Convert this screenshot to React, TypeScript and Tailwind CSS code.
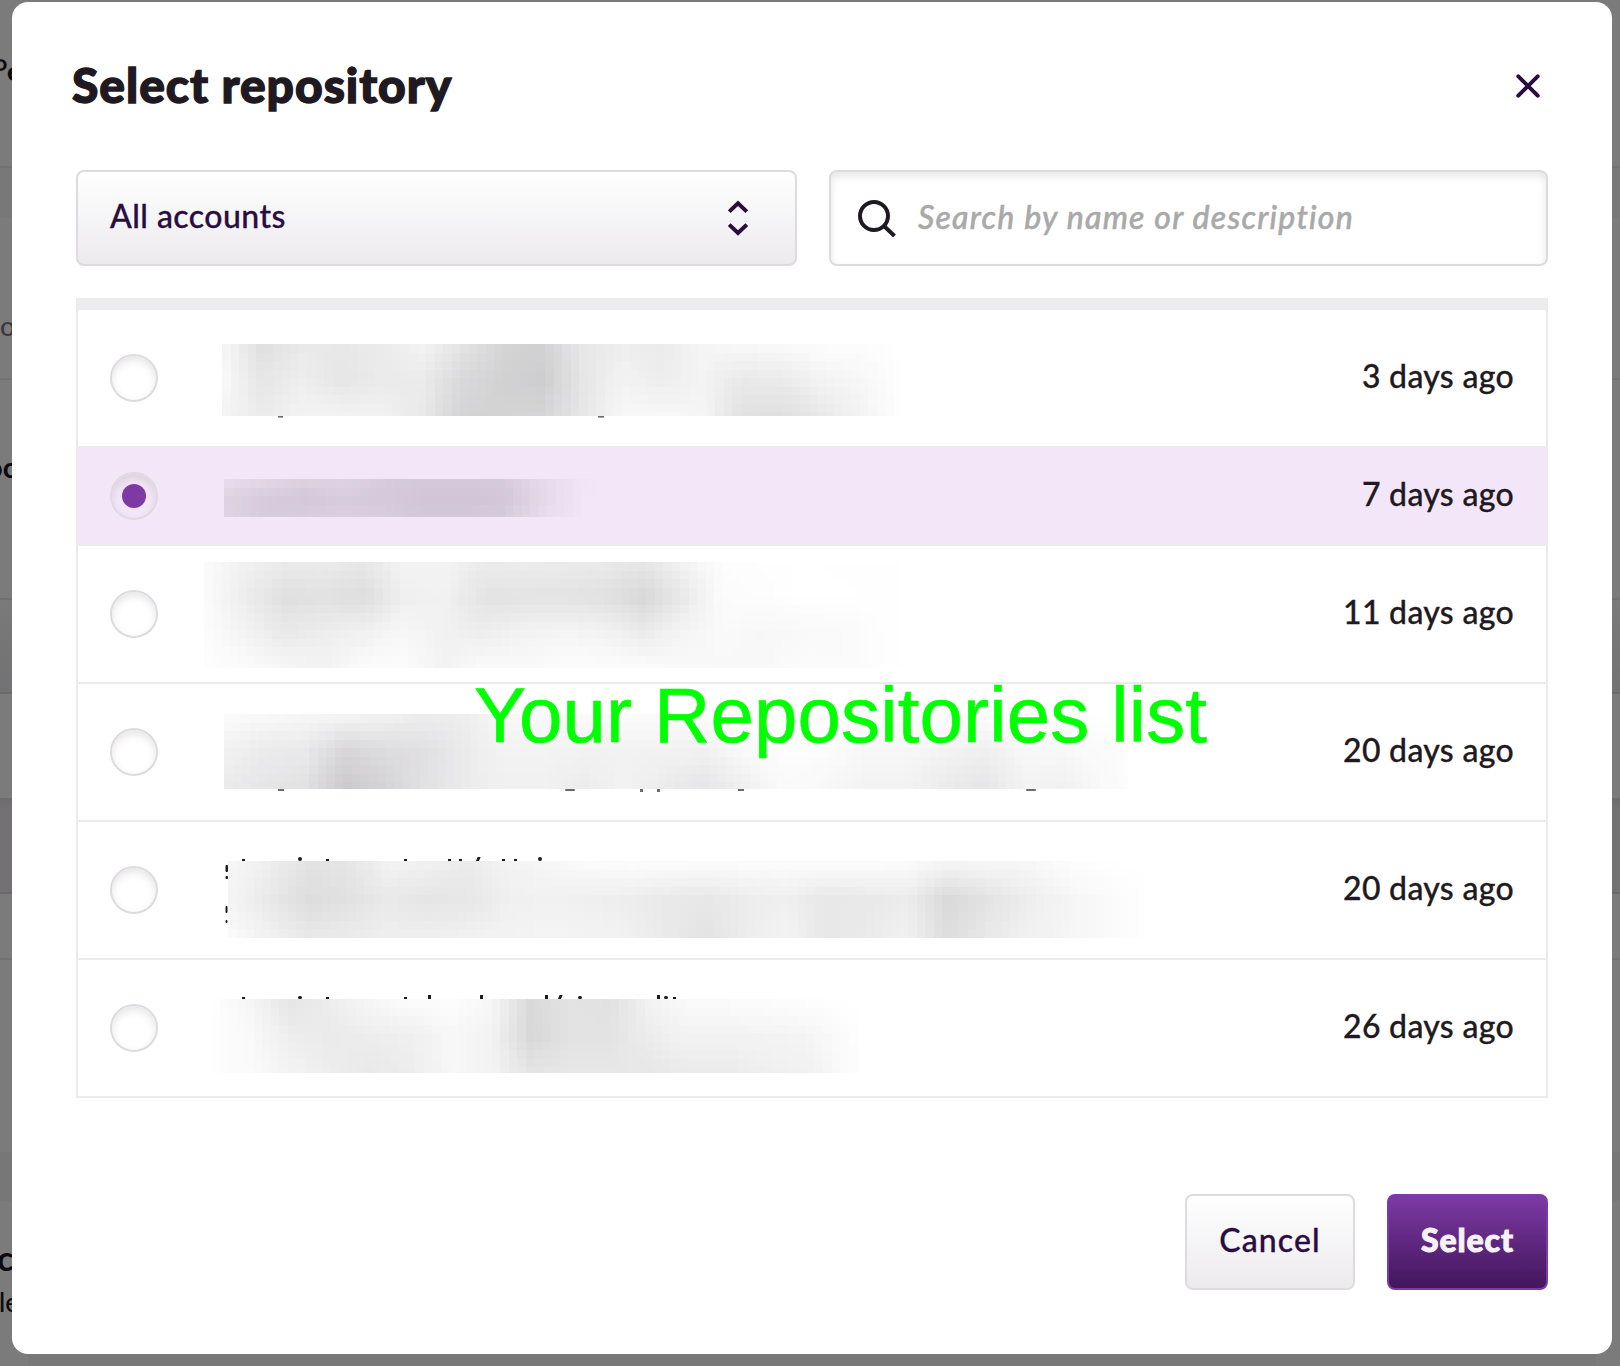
import React from 'react';

type Mark = { x: number; y: number; w: number; h: number; r?: number; slant?: boolean };

type Smudge = {
  box: string;
  width: number;
  height: number;
  tint: string;
  tones: number[][];
  marks?: Mark[];
  markColor?: string;
};

type Repo = { age: string; selected?: boolean; rowClass: string; smudge: Smudge };

const STEP = 40;
const CELL = 8.5;

function toneAt(tones: number[][], u: number, v: number) {
  const fy = Math.max(0, Math.min(1, v)) * (tones.length - 1);
  const r0 = Math.floor(fy);
  const r1 = Math.min(r0 + 1, tones.length - 1);
  const pick = (row: number[]) => {
    const c0 = Math.min(Math.floor(u), row.length - 1);
    const c1 = Math.min(c0 + 1, row.length - 1);
    return row[c0] + (row[c1] - row[c0]) * Math.min(1, u - c0);
  };
  const a = pick(tones[r0]);
  const b = pick(tones[r1]);
  return a + (b - a) * (fy - r0);
}

/* Pixelated privacy patch that hides a repository's name. */
function Redaction({ smudge }: { smudge: Smudge }) {
  const cols = Math.ceil(smudge.width / CELL);
  const rows = Math.ceil(smudge.height / CELL);
  const cells: React.ReactNode[] = [];
  for (let r = 0; r < rows; r++) {
    for (let c = 0; c < cols; c++) {
      const x = Math.round(c * CELL);
      const y = Math.round(r * CELL);
      const w = Math.min(Math.round((c + 1) * CELL), smudge.width) - x;
      const h = Math.min(Math.round((r + 1) * CELL), smudge.height) - y;
      const tone = toneAt(smudge.tones, (x + w / 2) / STEP, (y + h / 2) / smudge.height);
      cells.push(
        <rect key={`${r}-${c}`} x={x} y={y} width={w} height={h} fill={smudge.tint} fillOpacity={tone / 230} />,
      );
    }
  }
  return (
    <svg
      className={`block shrink-0 overflow-visible ${smudge.box}`}
      width={smudge.width}
      height={smudge.height}
      aria-hidden="true"
    >
      <g shapeRendering="crispEdges">{cells}</g>
      {(smudge.marks ?? []).map((m, i) => (
        <rect
          key={i}
          x={m.x}
          y={m.y}
          width={m.w}
          height={m.h}
          rx={m.r ?? 0}
          fill={smudge.markColor ?? '#1f1a22'}
          transform={m.slant ? 'skewX(-22)' : undefined}
        />
      ))}
    </svg>
  );
}

const repos: Repo[] = [
  {
    age: '3 days ago',
    rowClass: 'h-[138px]',
    smudge: {
      box: 'ml-[64px] mt-[34px]',
      width: 680,
      height: 72,
      tint: '#1c1820',
      tones: [
        [8, 32, 22, 22, 20, 12, 26, 42, 46, 24, 18, 20, 10, 6, 5, 2, 2, 0],
        [6, 25, 17, 25, 20, 20, 38, 46, 50, 26, 12, 18, 12, 22, 20, 12, 8, 0],
        [10, 20, 12, 12, 14, 22, 44, 44, 42, 24, 8, 7, 10, 30, 32, 22, 12, 0],
      ],
      marks: [
        { x: 56, y: 72, w: 5, h: 1.6 },
        { x: 376, y: 72, w: 6, h: 1.6 },
      ],
      markColor: '#6f6678',
    },
  },
  {
    age: '7 days ago',
    selected: true,
    rowClass: 'h-[98px] bg-[#f3e6f8]',
    smudge: {
      box: 'ml-[66px] mt-[31px]',
      width: 373,
      height: 38,
      tint: '#2c2838',
      tones: [
        [10, 18, 24, 22, 32, 34, 34, 32, 14, 2, 0],
        [24, 32, 36, 32, 34, 40, 40, 38, 16, 0, 0],
        [22, 32, 30, 28, 30, 36, 36, 32, 12, 0, 0],
      ],
    },
  },
  {
    age: '11 days ago',
    rowClass: 'h-[138px]',
    smudge: {
      box: 'ml-[46px] mt-[16px]',
      width: 697,
      height: 106,
      tint: '#1c1a20',
      tones: [
        [4, 14, 20, 20, 24, 12, 12, 20, 18, 20, 22, 24, 12, 2, 1, 0, 1, 1],
        [4, 18, 32, 30, 34, 16, 14, 28, 28, 28, 30, 40, 22, 3, 2, 0, 0, 1],
        [2, 12, 22, 18, 14, 8, 14, 18, 12, 10, 12, 20, 10, 6, 8, 6, 5, 1],
        [1, 4, 8, 12, 4, 3, 12, 4, 6, 3, 3, 3, 6, 7, 7, 4, 5, 1],
      ],
    },
  },
  {
    age: '20 days ago',
    rowClass: 'h-[138px]',
    smudge: {
      box: 'ml-[66px] mt-[30px]',
      width: 904,
      height: 75,
      tint: '#1f1724',
      tones: [
        [3, 6, 8, 8, 12, 18, 18, 7, 6, 5, 4, 4, 3, 2, 2, 2, 2, 2, 2, 2, 1, 1, 0, 0],
        [14, 20, 22, 42, 36, 32, 20, 12, 12, 13, 13, 13, 14, 6, 2, 2, 8, 8, 12, 16, 8, 8, 4, 0],
        [20, 26, 30, 54, 44, 30, 20, 14, 14, 20, 12, 20, 26, 16, 4, 8, 12, 12, 20, 26, 12, 14, 6, 0],
      ],
      marks: [
        { x: 54, y: 75, w: 6, h: 2 },
        { x: 341, y: 75, w: 10, h: 2, r: 1 },
        { x: 416, y: 75, w: 3, h: 3 },
        { x: 433, y: 75, w: 3, h: 3 },
        { x: 514, y: 75, w: 6, h: 2 },
        { x: 802, y: 75, w: 10, h: 2, r: 1 },
      ],
      markColor: '#6f6678',
    },
  },
  {
    age: '20 days ago',
    rowClass: 'h-[138px]',
    smudge: {
      box: 'ml-[70px] mt-[39px]',
      width: 917,
      height: 77,
      tint: '#1c1a20',
      tones: [
        [8, 16, 28, 26, 12, 14, 20, 12, 8, 4, 1, 2, 3, 3, 3, 2, 2, 4, 9, 8, 8, 2, 0, 0],
        [10, 22, 34, 30, 22, 26, 24, 16, 14, 16, 18, 22, 24, 18, 16, 24, 22, 19, 38, 28, 18, 10, 5, 0],
        [4, 14, 22, 20, 16, 16, 14, 12, 10, 12, 14, 22, 28, 18, 12, 24, 20, 14, 34, 22, 14, 10, 5, 0],
      ],
      marks: [
        { x: 14, y: -2, w: 3, h: 2 },
        { x: 70, y: -4, w: 4, h: 4, r: 2 },
        { x: 98, y: -2, w: 3, h: 2 },
        { x: 176, y: -2, w: 3, h: 2 },
        { x: 220, y: -2, w: 3, h: 2 },
        { x: 231, y: -2, w: 3, h: 2 },
        { x: 248, y: -4, w: 3, h: 4, slant: true },
        { x: 274, y: -2, w: 3, h: 2 },
        { x: 286, y: -2, w: 3, h: 2 },
        { x: 310, y: -4, w: 4, h: 4, r: 2 },
        { x: -2.5, y: 4, w: 2.5, h: 7, r: 1 },
        { x: -2.5, y: 15, w: 2.5, h: 3, r: 1 },
        { x: -2.5, y: 45, w: 2, h: 7, r: 1 },
        { x: -2.5, y: 59, w: 2, h: 3, r: 1 },
      ],
    },
  },
  {
    age: '26 days ago',
    rowClass: 'h-[138px]',
    smudge: {
      box: 'ml-[53px] mt-[39px]',
      width: 648,
      height: 74,
      tint: '#1c1a20',
      tones: [
        [0, 10, 26, 18, 8, 3, 2, 8, 38, 28, 30, 12, 5, 4, 2, 1, 0],
        [1, 6, 18, 20, 18, 16, 8, 12, 40, 28, 28, 18, 12, 12, 12, 10, 2],
        [1, 5, 12, 18, 22, 18, 8, 12, 26, 24, 24, 24, 20, 20, 16, 14, 3],
      ],
      marks: [
        { x: 31, y: -2, w: 3, h: 2 },
        { x: 87, y: -3, w: 4, h: 3, r: 1.5 },
        { x: 115, y: -2, w: 3, h: 2 },
        { x: 193, y: -2, w: 3, h: 2 },
        { x: 217, y: -4, w: 3, h: 4 },
        { x: 269, y: -4, w: 3, h: 4 },
        { x: 334, y: -4, w: 3, h: 4 },
        { x: 347, y: -4, w: 3, h: 4, slant: true },
        { x: 367, y: -3, w: 4, h: 3, r: 1.5 },
        { x: 446, y: -4, w: 3, h: 4 },
        { x: 453, y: -3, w: 4, h: 3, r: 1.5 },
        { x: 462, y: -2, w: 3, h: 2 },
      ],
    },
  },
];

function Radio({ checked }: { checked?: boolean }) {
  return (
    <span className="flex size-[48px] shrink-0 items-center justify-center self-center rounded-full border-2 border-[#dfdae0] shadow-[inset_0_4px_8px_rgba(0,0,0,0.1)]">
      {checked && <span className="size-[24px] rounded-full bg-[#7d3aa5]" />}
    </span>
  );
}

function RepoRow({ repo }: { repo: Repo }) {
  return (
    <li className={`flex items-start border-b-2 border-[#ebebeb] pr-[32px] pl-[32px] ${repo.rowClass}`}>
      <Radio checked={repo.selected} />
      <Redaction smudge={repo.smudge} />
      <span className="ml-auto self-center pb-[4px] text-[32px] leading-[40px] font-medium tracking-[0.3px] whitespace-nowrap text-[#1f1a22] [-webkit-text-stroke:0.3px_#1f1a22]">
        {repo.age}
      </span>
    </li>
  );
}

/* The dimmed page whose edges stay visible beside the dialog. */
function Backdrop({ children }: { children?: React.ReactNode }) {
  return (
    <div className="relative flex h-full flex-col overflow-hidden bg-[#7b7b7b]">
      <div className="h-[168px] shrink-0 border-b-2 border-[#727272]" />
      <div className="h-[50px] shrink-0 bg-[#787878]" />
      <div className="h-[162px] shrink-0 border-b-2 border-[#727272]" />
      <div className="h-[220px] shrink-0 border-b-2 border-[#707070]" />
      <div className="h-[94px] shrink-0 border-b-2 border-[#6c6a6d] bg-linear-to-b from-[#7a7a7a] to-[#727173]" />
      <div className="h-[104px] shrink-0" />
      <div className="h-[96px] shrink-0 border-b-2 border-[#6a686b] bg-linear-to-b from-[#6c6b6c] via-[#747174] via-10% to-[#747174]" />
      <div className="h-[66px] shrink-0 border-b-2 border-[#727272]" />
      <div className="h-[192px] shrink-0" />
      <div className="h-[49px] shrink-0 bg-[#777777]" />
      {children}
    </div>
  );
}

export default function App() {
  return (
    <div className="relative flex h-[1366px] w-[1620px] overflow-hidden bg-[#787878] font-[Lato,'Open_Sans',sans-serif]">
      <div className="w-[28px] shrink-0">
        <Backdrop>
          <span className="absolute top-[48px] left-[-9px] text-[27px] leading-[40px] font-medium text-[#0c0a0e]">P</span>
          <span className="absolute top-[51px] left-[7px] text-[27px] leading-[40px] font-black text-[#0c0a0e]">e</span>
          <span className="absolute top-[306px] left-[0px] text-[27px] leading-[40px] font-medium text-[#3d3740]">o</span>
          <span className="absolute top-[447px] left-[-14px] text-[29px] leading-[40px] font-bold text-[#0c0a0e]">oc</span>
          <span className="absolute top-[1237px] left-[-3px] text-[35px] leading-[40px] font-bold text-[#0c0a0e]">c</span>
          <span className="absolute top-[1282px] left-[-1px] text-[26px] leading-[40px] font-medium text-[#0c0a0e]">le</span>
        </Backdrop>
      </div>
      <main className="z-10 mt-[2px] -ml-[16px] flex h-[1352px] w-[1600px] shrink-0 flex-col rounded-[16px] bg-white px-[64px]">
        <header className="flex h-[168px] items-center justify-between pr-[8px]">
          <h1 className="-ml-[4px] pb-[3px] text-[48px] leading-[56px] font-black tracking-[0.95px] text-[#1f1a22] [-webkit-text-stroke:1.4px_#1f1a22]">
            Select repository
          </h1>
          <svg className="block" width="24" height="24" viewBox="0 0 24 24" fill="none" aria-label="Close">
            <path d="M2.3 2.3 21.7 21.7M21.7 2.3 2.3 21.7" stroke="#2a0d40" strokeWidth="4" strokeLinecap="round" />
          </svg>
        </header>

        <div className="flex h-[96px] gap-[32px]">
          <button className="flex w-[721px] items-center justify-between rounded-[8px] border-2 border-[#dfdae0] bg-linear-to-b from-white to-[#eceaed] pr-[46px] pl-[32px] text-[#2a0d40]">
            <span className="pb-[4px] text-[32px] leading-[40px] font-medium tracking-[0.45px] whitespace-nowrap [-webkit-text-stroke:0.3px_#2a0d40]">
              All accounts
            </span>
            <svg width="22" height="38" viewBox="0 0 22 38" fill="none" aria-hidden="true">
              <path d="M2.2 12.6 11 4.2l8.8 8.4M2.2 25.6 11 34l8.8-8.4" stroke="currentColor" strokeWidth="4" />
            </svg>
          </button>
          <label className="flex w-[719px] items-center rounded-[8px] border-2 border-[#dfdae0] bg-white pl-[27px] shadow-[inset_0_4px_8px_rgba(0,0,0,0.1)]">
            <svg className="shrink-0" width="38" height="38" viewBox="0 0 38 38" fill="none" aria-hidden="true">
              <circle cx="16" cy="17" r="14" stroke="#1f1a22" strokeWidth="4" />
              <path d="M26 27 36.5 37" stroke="#1f1a22" strokeWidth="4" />
            </svg>
            <span className="ml-[22px] pb-[3px] text-[32px] leading-[40px] font-medium tracking-[1.25px] whitespace-nowrap text-[#a9a9a9] italic [-webkit-text-stroke:0.5px_#a9a9a9]">
              Search by name or description
            </span>
          </label>
        </div>

        <section className="relative mt-[32px]">
          <ul className="border-x-2 border-t-[12px] border-x-[#ebebeb] border-t-[#ecebed]">
            {repos.map((repo, i) => (
              <RepoRow key={i} repo={repo} />
            ))}
          </ul>
          <p className="absolute top-[372px] left-[398px] font-['Liberation_Sans',Arial,sans-serif] text-[78px] leading-[90px] tracking-[0.15px] whitespace-nowrap text-[#00ff00] [-webkit-text-stroke:0.6px_#00ff00]">
            Your Repositories list
          </p>
        </section>

        <footer className="mt-[96px] flex h-[96px] justify-end gap-[32px] text-[32px] leading-[40px]">
          <button className="w-[170px] rounded-[8px] border-2 border-[#dfdae0] bg-linear-to-b from-white to-[#eceaed] pb-[4px] font-medium tracking-[1.1px] text-[#2a0d40] [-webkit-text-stroke:0.3px_#2a0d40]">
            Cancel
          </button>
          <button className="w-[161px] rounded-[8px] border-2 border-[#7d3aa5] bg-linear-to-b from-[#7d3aa5] to-[#43165d] pb-[4px] font-black tracking-[0.9px] text-[#f5f2f7] [-webkit-text-stroke:1px_#f5f2f7]">
            Select
          </button>
        </footer>
      </main>
      <div className="-ml-[16px] w-[24px] shrink-0">
        <Backdrop />
      </div>
    </div>
  );
}
